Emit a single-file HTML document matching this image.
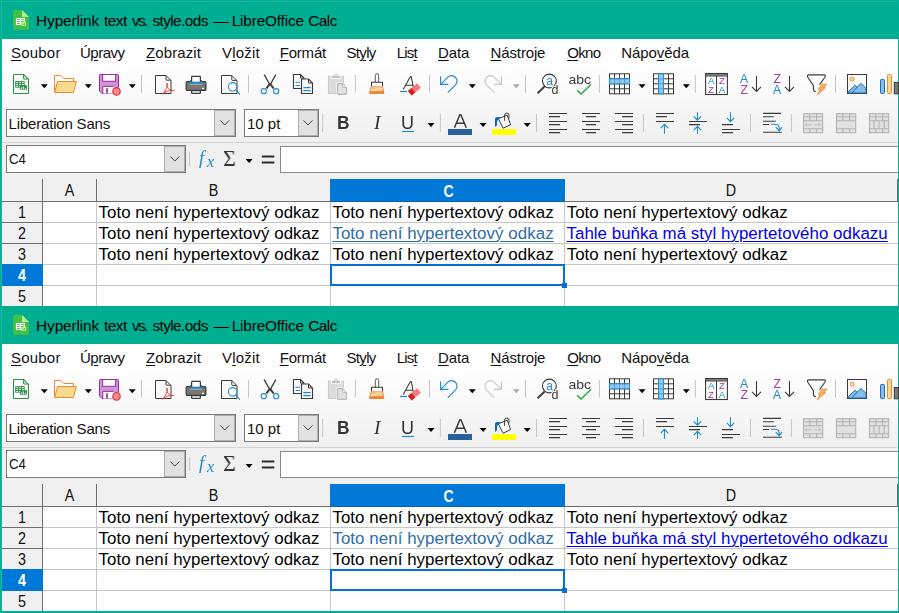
<!DOCTYPE html>
<html lang="cs"><head><meta charset="utf-8"><title>Hyperlink text vs. style.ods — LibreOffice Calc</title>
<style>
html,body{margin:0;padding:0}
body{width:899px;height:613px;overflow:hidden;background:#00af91;font-family:"Liberation Sans",sans-serif;color:#000;position:relative}
.win{position:absolute;left:0;width:899px;height:308px;overflow:hidden}
.a{position:absolute}
.t{position:absolute;white-space:nowrap;line-height:1}
.ui{font-size:15px;color:#111}
u{text-decoration:underline;text-decoration-thickness:1px;text-underline-offset:2px}
.cell{position:absolute;white-space:nowrap;font-size:16.67px;line-height:1;color:#000}
.hd{position:absolute;white-space:nowrap;font-size:15.6px;transform:scaleX(0.92);line-height:1;color:#111;text-align:center}
svg{position:absolute;left:0;top:0}
</style></head><body>
<div class="win" style="top:305px;height:308px"><div class="a" style="left:2px;top:38.8px;width:895.7px;height:270px;background:#fff;"></div>
<div class="a" style="left:2px;top:60px;width:895.7px;height:82px;background:linear-gradient(#ffffff,#f8f8f8 50%,#f0f0f0);"></div>
<div class="t ui" style="left:11.00px;top:45.3px;font-size:15px;letter-spacing:0.2px"><u>S</u>oubor</div>
<div class="t ui" style="left:79.90px;top:45.3px;font-size:15px;letter-spacing:-0.48px">Ú<u>p</u>ravy</div>
<div class="t ui" style="left:146.00px;top:45.3px;font-size:15px;letter-spacing:0.1px"><u>Z</u>obrazit</div>
<div class="t ui" style="left:222.00px;top:45.3px;font-size:15px;letter-spacing:0.2px">V<u>l</u>ožit</div>
<div class="t ui" style="left:279.70px;top:45.3px;font-size:15px;letter-spacing:-0.2px"><u>F</u>ormát</div>
<div class="t ui" style="left:346.50px;top:45.3px;font-size:15px;letter-spacing:-0.675px">St<u>y</u>ly</div>
<div class="t ui" style="left:396.70px;top:45.3px;font-size:15px;letter-spacing:-0.833px">Lis<u>t</u></div>
<div class="t ui" style="left:438.00px;top:45.3px;font-size:15px;letter-spacing:-0.133px"><u>D</u>ata</div>
<div class="t ui" style="left:490.60px;top:45.3px;font-size:15px;letter-spacing:-0.143px"><u>N</u>ástroje</div>
<div class="t ui" style="left:567.20px;top:45.3px;font-size:15px;letter-spacing:-0.667px"><u>O</u>kno</div>
<div class="t ui" style="left:621.20px;top:45.3px;font-size:15px;letter-spacing:-0.057px">Nápo<u>v</u>ěda</div>
<div class="a" style="left:2px;top:142px;width:895.7px;height:37px;background:#f0f0f0;border-top:1px solid #d4d4d4;box-sizing:border-box"></div>
<div class="a" style="left:6px;top:109px;width:230px;height:27.5px;background:#fff;border:1px solid #7a7a7a;box-sizing:border-box"></div>
<div class="a" style="left:214px;top:110px;width:21px;height:25.5px;background:#e1e1e1;border:1px solid #adadad;box-sizing:border-box"></div>
<div class="t ui" style="left:8.60px;top:115.6px;font-size:15px;letter-spacing:-0.186px">Liberation Sans</div>
<div class="a" style="left:244px;top:109px;width:75px;height:27.5px;background:#fff;border:1px solid #7a7a7a;box-sizing:border-box"></div>
<div class="a" style="left:297.5px;top:110px;width:20.5px;height:25.5px;background:#e1e1e1;border:1px solid #adadad;box-sizing:border-box"></div>
<div class="t ui" style="left:247.00px;top:115.6px;font-size:15px;letter-spacing:0.0px">10 pt</div>
<div class="a" style="left:6px;top:145.3px;width:180px;height:27.3px;background:#fff;border:1px solid #7a7a7a;box-sizing:border-box"></div>
<div class="a" style="left:164.2px;top:146.3px;width:21px;height:25.3px;background:#e1e1e1;border:1px solid #adadad;box-sizing:border-box"></div>
<div class="t ui" style="left:8.6px;top:151.3px;font-size:15.3px;transform:scaleX(0.86);transform-origin:0 0">C4</div>
<div class="a" style="left:280.2px;top:145.8px;width:620px;height:27px;background:#fff;border:1px solid #8a8a8a;box-sizing:border-box"></div>
<div class="a" style="left:2px;top:179px;width:895.7px;height:130px;background:#fff;"></div>
<div class="a" style="left:2px;top:179px;width:895.5px;height:22.4px;background:#f0f0f0;"></div>
<div class="a" style="left:2px;top:201.4px;width:41px;height:107px;background:#f0f0f0;"></div>
<div class="a" style="left:43px;top:221.7px;width:855px;height:1px;background:#c6c6c6;"></div>
<div class="a" style="left:43px;top:242.7px;width:855px;height:1px;background:#c6c6c6;"></div>
<div class="a" style="left:43px;top:263.6px;width:855px;height:1px;background:#c6c6c6;"></div>
<div class="a" style="left:43px;top:284.6px;width:855px;height:1px;background:#c6c6c6;"></div>
<div class="a" style="left:95.9px;top:201.4px;width:1px;height:107px;background:#c6c6c6;"></div>
<div class="a" style="left:329.9px;top:201.4px;width:1px;height:107px;background:#c6c6c6;"></div>
<div class="a" style="left:564.3px;top:201.4px;width:1px;height:107px;background:#c6c6c6;"></div>
<div class="a" style="left:2px;top:201px;width:895.5px;height:1px;background:#6e6e6e;"></div>
<div class="a" style="left:42.2px;top:179px;width:1px;height:130px;background:#6e6e6e;"></div>
<div class="a" style="left:95.9px;top:179px;width:1px;height:22.4px;background:#6e6e6e;"></div>
<div class="a" style="left:896.6px;top:179px;width:1px;height:23px;background:#6e6e6e;"></div>
<div class="a" style="left:2px;top:221.7px;width:41px;height:1px;background:#6e6e6e;"></div>
<div class="a" style="left:2px;top:242.7px;width:41px;height:1px;background:#6e6e6e;"></div>
<div class="a" style="left:330px;top:179px;width:234.8px;height:22.6px;background:#0078d7;"></div>
<div class="a" style="left:2px;top:264.1px;width:41.2px;height:21.6px;background:#0078d7;"></div>
<div class="hd" style="left:43px;width:53px;top:182.9px;">A</div>
<div class="hd" style="left:97px;width:233px;top:182.9px;">B</div>
<div class="a" style="left:330px;top:200.5px;width:234.8px;height:1.1px;background:#0064b8;"></div>
<div class="hd" style="left:331.2px;width:235.00000000000006px;top:183.6px;color:#fff;font-weight:bold;transform:scaleX(0.9)">C</div>
<div class="hd" style="left:565px;width:332px;top:182.9px;">D</div>
<div class="hd" style="left:2px;width:40px;top:204.8px;">1</div>
<div class="hd" style="left:2px;width:40px;top:225.75px;">2</div>
<div class="hd" style="left:2px;width:40px;top:246.70000000000002px;">3</div>
<div class="hd" style="left:2px;width:40px;top:267.65px;color:#fff;font-weight:bold">4</div>
<div class="hd" style="left:2px;width:40px;top:288.6px;">5</div>
<div class="cell" style="left:98.50px;top:204.7px;font-size:16.9px;letter-spacing:0.048px">Toto není hypertextový odkaz</div>
<div class="cell" style="left:332.40px;top:204.7px;font-size:16.9px;letter-spacing:0.056px">Toto není hypertextový odkaz</div>
<div class="cell" style="left:566.70px;top:204.7px;font-size:16.9px;letter-spacing:0.044px">Toto není hypertextový odkaz</div>
<div class="cell" style="left:98.50px;top:225.65px;font-size:16.9px;letter-spacing:0.048px">Toto není hypertextový odkaz</div>
<div class="cell" style="left:332.40px;top:225.65px;font-size:16.9px;color:#2e6ca6;letter-spacing:0.056px">Toto není hypertextový odkaz</div>
<div class="cell" style="left:566.50px;top:225.65px;font-size:16.9px;color:#0000ee;text-decoration:underline;text-decoration-thickness:1px;text-underline-offset:2px;letter-spacing:0.026px">Tahle buňka má styl hypertetového odkazu</div>
<div class="cell" style="left:98.50px;top:246.6px;font-size:16.9px;letter-spacing:0.048px">Toto není hypertextový odkaz</div>
<div class="cell" style="left:332.40px;top:246.6px;font-size:16.9px;letter-spacing:0.056px">Toto není hypertextový odkaz</div>
<div class="cell" style="left:566.70px;top:246.6px;font-size:16.9px;letter-spacing:0.044px">Toto není hypertextový odkaz</div>
<div class="a" style="left:330px;top:264px;width:235.1px;height:22.1px;background:transparent;border:2px solid #0470d6;box-sizing:border-box"></div>
<div class="a" style="left:562px;top:283px;width:5.1px;height:5px;background:#0470d6;"></div>
<div class="a" style="left:0px;top:0px;width:899px;height:38.8px;background:#00af91;"></div>
<div class="a" style="left:0px;top:0px;width:2px;height:310px;background:#00af91;"></div>
<div class="a" style="left:897.7px;top:0px;width:2px;height:310px;background:#00af91;"></div>
<div class="a" style="left:1px;top:1px;width:1px;height:310px;background:rgba(255,255,255,0.10);"></div>
<div class="t" style="left:36.10px;top:12.8px;font-size:15.4px;color:#000;letter-spacing:-0.125px">Hyperlink</div>
<div class="t" style="left:103.90px;top:12.8px;font-size:15.4px;color:#000;letter-spacing:-0.467px">text</div>
<div class="t" style="left:132.00px;top:12.8px;font-size:15.4px;color:#000;letter-spacing:-1.75px">vs.</div>
<div class="t" style="left:152.40px;top:12.8px;font-size:15.4px;color:#000;letter-spacing:-0.588px">style.ods</div>
<div class="t" style="left:213.50px;top:12.8px;font-size:15.4px;color:#000;letter-spacing:0px">—</div>
<div class="t" style="left:231.70px;top:12.8px;font-size:15.4px;color:#000;letter-spacing:-0.18px">LibreOffice</div>
<div class="t" style="left:308.20px;top:12.8px;font-size:15.4px;color:#000;letter-spacing:-0.533px">Calc</div>
<svg width="899" height="40" viewBox="0 0 899 40">
<path d="M14.6,10 H22 L29,16.9 V28.3 Q29,29.85 27.4,29.85 H14.6 Q13.05,29.85 13.05,28.3 V11.5 Q13.05,10 14.6,10 Z" fill="#43c046"/>
<path d="M22,10 L29,16.9 H22 Z" fill="#b4f08c"/>
<rect x="15.9" y="18" width="9" height="6.9" fill="#fff"/>
<path d="M17,19.5 h2.8 M17,21.5 h2.8 M17,23.5 h2.8 M21,19.5 h2.8 M21,21.5 h2.8" stroke="#43c046" stroke-width="0.9"/>
<rect x="21.1" y="22" width="5" height="3.9" fill="#b4f08c"/>
<path d="M22.6,25 v-1 M24.4,25 v-1.8" stroke="#43c046" stroke-width="0.9"/>
</svg>
<svg width="899" height="104" viewBox="0 70 899 104" style="top:70px;will-change:transform">
<path d="M14.3,74.5 H23.6 L28.5,79.4 V92.7 Q28.5,93.5 27.7,93.5 H14.3 Q13.5,93.5 13.5,92.7 V75.3 Q13.5,74.5 14.3,74.5 Z" fill="#fdfdfd" stroke="#2f9048" stroke-width="1.1" />
<path d="M23.6,74.8 V78 Q23.6,79 24.6,79 H28.2" fill="none" stroke="#2f9048" stroke-width="1.1" />
<rect x="15.2" y="81.1" width="9.5" height="6.6" fill="#2f9048" />
<rect x="16.2" y="82.2" width="1.9" height="0.9" fill="#fff" />
<rect x="16.2" y="84.1" width="1.9" height="0.9" fill="#fff" />
<rect x="16.2" y="86.0" width="1.9" height="0.9" fill="#fff" />
<rect x="19.1" y="82.2" width="1.9" height="0.9" fill="#fff" />
<rect x="19.1" y="84.1" width="1.9" height="0.9" fill="#fff" />
<rect x="19.1" y="86.0" width="1.9" height="0.9" fill="#fff" />
<rect x="22.0" y="82.2" width="1.9" height="0.9" fill="#fff" />
<rect x="22.0" y="84.1" width="1.9" height="0.9" fill="#fff" />
<rect x="22.0" y="86.0" width="1.9" height="0.9" fill="#fff" />
<rect x="20" y="85.2" width="6.9" height="4.5" fill="#2f9048" />
<rect x="20.9" y="87.4" width="1.0" height="1.5" fill="#fff" />
<rect x="22.9" y="86.4" width="1.0" height="2.5" fill="#fff" />
<rect x="24.9" y="87.9" width="1.0" height="1.0" fill="#fff" />
<path d="M40.8,84.2 h7 l-3.5,4 z" fill="#000" />
<path d="M54.5,92.3 V75.5 H60.8 L64,78.5 H73.5 V81.5" fill="#fff" stroke="#ed8733" stroke-width="1" stroke-linejoin="round"/>
<path d="M57.6,81.5 H76.4 L73.4,92.5 H54.6 Z" fill="#f8db8f" stroke="#ed8733" stroke-width="1" stroke-linejoin="round"/>
<path d="M84.8,84.2 h7 l-3.5,4 z" fill="#000" />
<path d="M100.2,74.5 H117.5 Q118.5,74.5 118.5,75.5 V93.5 H102 L99.5,91 V75.2 Q99.5,74.5 100.2,74.5 Z" fill="#d291d8" stroke="#9b2d9b" stroke-width="1" />
<rect x="102.6" y="74.5" width="13" height="6.8" fill="#fafafa" stroke="#9b2d9b" stroke-width="1" />
<rect x="102.8" y="86.4" width="11" height="7.1" fill="#fff" />
<path d="M102.8,93.5 V86.4 H113.5" fill="none" stroke="#9b2d9b" stroke-width="1" />
<path d="M107,88.3 V93.2" fill="none" stroke="#9b2d9b" stroke-width="1.7" />
<circle cx="116.5" cy="91.4" r="4.5" fill="#fafafa"/>
<circle cx="116.5" cy="91.4" r="3.7" fill="#ff8c90" stroke="#dd3030" stroke-width="1.2"/>
<path d="M128.8,84.2 h7 l-3.5,4 z" fill="#000" />
<path d="M141.5,75 V92.7" fill="none" stroke="#c6c6c6" stroke-width="1" />
<path d="M155.5,75.5 H166 L171,80.5 V93.5 H155.5 Z" fill="#fafafa" stroke="#3a3a38" stroke-width="1" />
<path d="M166,75.8 V79.5 Q166,80.2 166.7,80.2 H170.8" fill="none" stroke="#3a3a38" stroke-width="1" />
<path d="M162.3,94.3 C165.3,91.5 167.5,87 167.5,84.2 C167.5,82.8 166.5,82.8 166.5,84.2 C166.5,87.4 169.5,90.8 173.6,90.5 C170,89.8 165.5,91.3 162.3,94.3 Z" fill="none" stroke="#ee4040" stroke-width="0.95" stroke-linejoin="round"/>
<path d="M187.2,81.6 H204.9 Q205.9,81.6 205.9,82.6 V89.4 Q205.9,90.4 204.9,90.4 H187.2 Q186.2,90.4 186.2,89.4 V82.6 Q186.2,81.6 187.2,81.6 Z" fill="#797774" stroke="#3a3a38" stroke-width="1.2" />
<rect x="191.6" y="76.4" width="8.8" height="6" fill="#fdfdfd" stroke="#3a3a38" stroke-width="1.2" rx="0.8" />
<path d="M189.9,79.9 H191 V81.9 H201 V79.9 H202.1 V83.9 H189.9 Z" fill="#1e8bcd" />
<path d="M191.6,90.6 V92.4 Q191.6,93.3 192.5,93.3 H199.5 Q200.4,93.3 200.4,92.4 V90.6 Z" fill="#fdfdfd" stroke="#3a3a38" stroke-width="1.2" />
<rect x="202" y="87.8" width="2" height="1.2" fill="#fff" />
<rect x="190.2" y="83.9" width="11.6" height="0.5" fill="#e8e8e8" />
<path d="M221.5,75.5 H231.8 L237,80.7 V93.5 H221.5 Z" fill="#fafafa" stroke="#3a3a38" stroke-width="1" />
<path d="M231.8,75.8 V79.7 Q231.8,80.4 232.5,80.4 H236.8" fill="none" stroke="#3a3a38" stroke-width="1" />
<circle cx="232.6" cy="86.8" r="4.2" fill="#fdfdfd" stroke="#1e8bcd" stroke-width="1.05"/>
<path d="M235.6,89.9 L239.9,94.6" fill="none" stroke="#1e8bcd" stroke-width="1.15" />
<path d="M248.5,75 V92.7" fill="none" stroke="#c6c6c6" stroke-width="1" />
<path d="M264.2,74.6 L270,85 L275.8,74.6" fill="none" stroke="#3a3a38" stroke-width="1.3" stroke-linejoin="round"/>
<path d="M270,83.6 L266.4,88.5 M270,83.6 L273.6,88.5" fill="none" stroke="#3a3a38" stroke-width="2" />
<circle cx="263.8" cy="91.2" r="2.6" fill="#fff" stroke="#1e8bcd" stroke-width="1.1"/>
<circle cx="276.2" cy="91.2" r="2.6" fill="#fff" stroke="#1e8bcd" stroke-width="1.1"/>
<path d="M293.5,74.5 H300.5 L304,78 V88.5 H293.5 Z" fill="#fdfdfd" stroke="#3a3a38" stroke-width="1.15" />
<path d="M300.5,74.8 V78 H303.8" fill="none" stroke="#3a3a38" stroke-width="1" />
<path d="M295.5,82.3 H300 M295.5,85.5 H300" fill="none" stroke="#1e8bcd" stroke-width="1.1" />
<path d="M301.5,79 H308.5 L312.5,83 V93.5 H301.5 Z" fill="#fdfdfd" stroke="#3a3a38" stroke-width="1.15" />
<path d="M308.5,79.3 V83 H312.2" fill="none" stroke="#3a3a38" stroke-width="1" />
<path d="M303.3,87.6 H310.7 M303.3,90.6 H310.7" fill="none" stroke="#1e8bcd" stroke-width="1.1" />
<rect x="328.4" y="76.2" width="15.2" height="17.3" fill="#dcdcdc" stroke="#c6c6c6" stroke-width="0.9" />
<rect x="330.9" y="75.5" width="10.2" height="3.2" fill="#fafafa" />
<rect x="332" y="75.9" width="7.9" height="2" fill="#bdbdbd" />
<path d="M334.2,76 A1.75,1.75 0 0 1 337.7,76" fill="#fafafa" stroke="#bdbdbd" stroke-width="0.9" />
<path d="M337.1,82.6 H343 L347.5,87 V95.4 H336.6 V82.6 Z" fill="#fafafa" />
<path d="M338.3,83.6 H342.6 L346.5,87.6 V93.6 Q346.5,94.4 345.7,94.4 H338.3 Q337.6,94.4 337.6,93.6 V84.4 Q337.6,83.6 338.3,83.6 Z" fill="#e1e1e1" stroke="#b9b9b9" stroke-width="1.1" />
<path d="M342.6,83.9 V86.6 Q342.6,87.5 343.5,87.5 H346.3" fill="#f0f0f0" stroke="#b9b9b9" stroke-width="1" />
<path d="M355.4,75 V92.7" fill="none" stroke="#c6c6c6" stroke-width="1" />
<path d="M375.3,82.2 V75.4 Q375.3,73.7 377,73.7 Q378.7,73.7 378.7,75.4 V82.2" fill="#fdfdfd" stroke="#5a5a58" stroke-width="1" />
<path d="M371.5,86.6 V82.3 H382.5 V86.6" fill="#fdfdfd" stroke="#3a3a38" stroke-width="1.1" />
<path d="M371.3,86.9 H382.7 L383.8,93.5 H369.4 Z" fill="#fde3bb" stroke="#ed8733" stroke-width="1" stroke-linejoin="round"/>
<path d="M369.9,91.3 L383.5,90.7 L383.8,93.5 H369.4 Z" fill="#ed8733" />
<path d="M371.2,88.4 L383,90" fill="none" stroke="#f4a95c" stroke-width="0.8" />
<path d="M403.2,89.5 L410.4,76.6 H411.3 L413.8,89.5 M405.7,85.3 H413" fill="none" stroke="#3a3a38" stroke-width="1.05" stroke-linejoin="round"/>
<path d="M400,91.5 H407" fill="none" stroke="#1e8bcd" stroke-width="1.2" />
<g transform="translate(414.4,89.4) rotate(-40)"><rect x="-6" y="-2.9" width="12" height="5.8" fill="#f4787c"/><rect x="-6" y="-2.9" width="4.6" height="5.8" fill="#d42222"/></g>
<path d="M429.5,75 V92.7" fill="none" stroke="#c6c6c6" stroke-width="1" />
<path d="M447.8,92.6 L455.6,84.8 A5.45,5.45 0 0 0 447.9,77.1 L441.2,83.8" fill="none" stroke="#1e8bcd" stroke-width="1.15" />
<path d="M440.6,76.6 V84.4 H448.4" fill="none" stroke="#1e8bcd" stroke-width="1.15" />
<path d="M468.8,84.2 h7 l-3.5,4 z" fill="#000" />
<path d="M494.2,92.6 L486.4,84.8 A5.45,5.45 0 0 1 494.1,77.1 L500.8,83.8" fill="none" stroke="#c8c8c8" stroke-width="1.15" />
<path d="M501.4,76.6 V84.4 H493.6" fill="none" stroke="#c8c8c8" stroke-width="1.15" />
<path d="M512.8,84.2 h7 l-3.5,4 z" fill="#a8a8a8" />
<path d="M525.5,75 V92.7" fill="none" stroke="#c6c6c6" stroke-width="1" />
<circle cx="549.4" cy="81" r="6.9" fill="#fdfdfd" stroke="#3a3a38" stroke-width="1.1"/>
<path d="M544.6,86.5 L537.6,93.2" fill="none" stroke="#3a3a38" stroke-width="1.9" />
<text x="546.2" y="84.7" font-size="12" fill="#1e8bcd" font-family="Liberation Sans, sans-serif" >a</text>
<text x="551.6" y="93.7" font-size="12.5" fill="#3a3a38" font-family="Liberation Sans, sans-serif" stroke="#fafafa" stroke-width="2.2" paint-order="stroke">d</text>
<text x="568.4" y="83.9" font-size="12.6" fill="#3a3a38" font-family="Liberation Sans, sans-serif" textLength="22.6" lengthAdjust="spacingAndGlyphs">abc</text>
<path d="M577.2,90.4 L581.2,94 L591,84.3" fill="none" stroke="#2aa84a" stroke-width="1.5" />
<path d="M599.4,75 V92.7" fill="none" stroke="#c6c6c6" stroke-width="1" />
<rect x="609.5" y="73.8" width="20" height="20" fill="#fff" stroke="#3a3a38" stroke-width="1" />
<path d="M614.5,73.8 v20 M609.5,78.8 h20 M619.5,73.8 v20 M609.5,83.8 h20 M624.5,73.8 v20 M609.5,88.8 h20 " fill="none" stroke="#3a3a38" stroke-width="1" />
<rect x="609.5" y="78.8" width="20" height="5" fill="#92c7ef" stroke="#1e8bcd" stroke-width="1" />
<path d="M614.5,78.8 v5 M619.5,78.8 v5 M624.5,78.8 v5" fill="none" stroke="#4fa3dc" stroke-width="1" />
<path d="M638.5999999999999,84.2 h7 l-3.5,4 z" fill="#000" />
<rect x="653.5" y="73.8" width="20" height="20" fill="#fff" stroke="#3a3a38" stroke-width="1" />
<path d="M658.5,73.8 v20 M653.5,78.8 h20 M663.5,73.8 v20 M653.5,83.8 h20 M668.5,73.8 v20 M653.5,88.8 h20 " fill="none" stroke="#3a3a38" stroke-width="1" />
<rect x="658.5" y="73.8" width="5" height="20" fill="#92c7ef" stroke="#1e8bcd" stroke-width="1" />
<path d="M658.5,78.8 h5 M658.5,83.8 h5 M658.5,88.8 h5" fill="none" stroke="#4fa3dc" stroke-width="1" />
<path d="M682.8,84.2 h7 l-3.5,4 z" fill="#000" />
<path d="M695.4,75 V92.7" fill="none" stroke="#c6c6c6" stroke-width="1" />
<rect x="705.6" y="73.5" width="21.8" height="21" fill="#fdfdfd" stroke="#3a3a38" stroke-width="1.1" />
<rect x="706" y="74" width="21" height="1.6" fill="#797774" />
<path d="M705.5,76 H727.5" fill="none" stroke="#3a3a38" stroke-width="1" />
<path d="M716.5,76 V94.5" fill="none" stroke="#3a3a38" stroke-width="1" />
<text x="708" y="84.4" font-size="9.7" fill="#1e8bcd" font-family="Liberation Sans, sans-serif" >A</text>
<text x="708" y="93" font-size="9.5" fill="#a33e9a" font-family="Liberation Sans, sans-serif" >Z</text>
<text x="718.9" y="83.8" font-size="9.5" fill="#a33e9a" font-family="Liberation Sans, sans-serif" >Z</text>
<text x="718.8" y="93" font-size="9.7" fill="#1e8bcd" font-family="Liberation Sans, sans-serif" >A</text>
<text x="739.9" y="82.9" font-size="12.2" fill="#1e8bcd" font-family="Liberation Sans, sans-serif" >A</text>
<text x="740.6" y="93.9" font-size="12.2" fill="#a33e9a" font-family="Liberation Sans, sans-serif" >Z</text>
<path d="M756.5,76 V91 M752,86.8 L756.5,91.4 L761,86.8" fill="none" stroke="#3a3a38" stroke-width="1.1" />
<text x="773.6" y="82.9" font-size="12.2" fill="#a33e9a" font-family="Liberation Sans, sans-serif" >Z</text>
<text x="772.9" y="93.9" font-size="12.2" fill="#1e8bcd" font-family="Liberation Sans, sans-serif" >A</text>
<path d="M789.5,76 V91 M785,86.8 L789.5,91.4 L794,86.8" fill="none" stroke="#3a3a38" stroke-width="1.1" />
<path d="M808.9,74.9 H823.9 Q826.2,75.1 824.9,77.2 L819.6,84.6 M813.4,85.6 L807.8,77.2 Q806.6,75.1 808.9,74.9 M813.4,85.6 V89.6 Q813.5,91.2 815.8,91.7" fill="none" stroke="#3a3a38" stroke-width="1.1" stroke-linejoin="round"/>
<path d="M821.8,84.2 H827 L823.6,87.6 H825.6 L817.2,95 L820.2,89.4 H818.4 Z" fill="#f9b35c" stroke="#ed8733" stroke-width="0.8" stroke-linejoin="round"/>
<path d="M835.5,75 V92.7" fill="none" stroke="#c6c6c6" stroke-width="1" />
<rect x="847.5" y="74.5" width="19" height="19" fill="#fafafa" stroke="#3a3a38" stroke-width="1" />
<circle cx="852.2" cy="79.2" r="2" fill="#fbd9a0" stroke="#ed8733" stroke-width="0.9"/>
<path d="M848,92 L855,85.3 L857,87.2 L861,83.4 L866,88.3 V93 H848 Z" fill="#83beec" stroke="#1e6eb0" stroke-width="1" stroke-linejoin="round"/>
<path d="M852,93 L857,87.2" fill="none" stroke="#1e6eb0" stroke-width="1" />
<rect x="880.5" y="79.5" width="4" height="14" fill="#83beec" stroke="#1e6eb0" stroke-width="1" rx="0.8" />
<rect x="887.5" y="74.5" width="4" height="19" fill="#f8db8f" stroke="#ed8733" stroke-width="1" rx="0.8" />
<rect x="894.3" y="82.5" width="4" height="11.3" fill="#7a7a78" stroke="#3a3a38" stroke-width="1" />
<path d="M220.2,120.4 L224.7,125.0 L229.2,120.4" fill="none" stroke="#444" stroke-width="1.0" />
<path d="M303.5,120.4 L308,125.0 L312.5,120.4" fill="none" stroke="#444" stroke-width="1.0" />
<path d="M322.7,114 V131.8" fill="none" stroke="#c6c6c6" stroke-width="1" />
<path d="M402,131.5 H414" fill="none" stroke="#1e8bcd" stroke-width="1.2" />
<path d="M427.5,123.0 h7 l-3.5,4 z" fill="#000" />
<path d="M440.4,114 V131.8" fill="none" stroke="#c6c6c6" stroke-width="1" />
<path d="M454.4,127.8 L459.8,114.8 H460.9 L466.3,127.8 M456.4,123.2 H464.3" fill="none" stroke="#3a3a38" stroke-width="1.5" stroke-linejoin="round"/>
<rect x="448" y="129" width="24" height="6" fill="#2a6099" />
<path d="M479.6,123.0 h7 l-3.5,4 z" fill="#000" />
<path d="M495,127 V119.2 Q495,117 497.2,117 L500.8,117.2 L498.4,118.9 L497.1,121.2 L496.9,125.2 Z" fill="#0a68c0" />
<path d="M498.3,118.8 L507.2,115.1 L510.6,124.6 L503.1,128.2 Z" fill="#fdfdfd" stroke="#3a3a38" stroke-width="1" stroke-linejoin="round"/>
<path d="M504.6,120.8 V115.2 Q504.6,113 506.8,113 Q509,113 509,115.2 V118.2" fill="none" stroke="#3a3a38" stroke-width="1" />
<rect x="492" y="129" width="24" height="6" fill="#ffff00" />
<path d="M523.6999999999999,123.0 h7 l-3.5,4 z" fill="#000" />
<path d="M536.5,114 V131.8" fill="none" stroke="#c6c6c6" stroke-width="1" />
<path d="M549,113.5 H567 M549,116.6 H560 M549,121.5 H567 M549,124.6 H560 M549,129.5 H567 M549,132.6 H560 " fill="none" stroke="#3a3a38" stroke-width="1.1" />
<path d="M582,113.5 H600 M586,116.6 H596 M582,121.5 H600 M586,124.6 H596 M582,129.5 H600 M586,132.6 H596 " fill="none" stroke="#3a3a38" stroke-width="1.1" />
<path d="M615,113.5 H633 M622,116.6 H633 M615,121.5 H633 M622,124.6 H633 M615,129.5 H633 M622,132.6 H633 " fill="none" stroke="#3a3a38" stroke-width="1.1" />
<path d="M643.4,114 V131.8" fill="none" stroke="#c6c6c6" stroke-width="1" />
<path d="M656,113.5 H674 M656,116.6 H667 M656,121.5 H674 " fill="none" stroke="#3a3a38" stroke-width="1.1" />
<path d="M664.5,133.8 V124.6 M660.8,128.2 L664.5,124.4 L668.2,128.2" fill="none" stroke="#1e8bcd" stroke-width="1.1" />
<path d="M689,121.5 H707 M689,124.6 H700 " fill="none" stroke="#3a3a38" stroke-width="1.1" />
<path d="M697.5,112.2 V120 M693.8,116.4 L697.5,120.2 L701.2,116.4" fill="none" stroke="#1e8bcd" stroke-width="1.1" />
<path d="M697.5,133.8 V126.6 M693.8,130.2 L697.5,126.4 L701.2,130.2" fill="none" stroke="#1e8bcd" stroke-width="1.1" />
<path d="M722,124.6 H733 M722,129.5 H740 M722,132.6 H733 " fill="none" stroke="#3a3a38" stroke-width="1.1" />
<path d="M730.5,112.2 V121.4 M726.8,117.8 L730.5,121.6 L734.2,117.8" fill="none" stroke="#1e8bcd" stroke-width="1.1" />
<path d="M750.5,114 V131.8" fill="none" stroke="#c6c6c6" stroke-width="1" />
<path d="M763,113.4 H781 M763,116.8 H773.8 M763,121.2 H775.8 M763,124.5 H769 M763,132.2 H781.8 " fill="none" stroke="#3a3a38" stroke-width="1.1" />
<path d="M771,124.3 H775.5 Q779.2,124.5 779.3,128.5 V130.4 M775.8,127.2 L779.3,130.8 L782,127.2" fill="none" stroke="#1e8bcd" stroke-width="1.1" />
<path d="M791.4,114 V131.8" fill="none" stroke="#c6c6c6" stroke-width="1" />
<rect x="803.5" y="113.7" width="19.2" height="19" fill="#e1e1e1" stroke="#b3b3b3" stroke-width="1.1" />
<path d="M803.5,116.8 h19 M803.5,120.7 h19 M803.5,128.8 h19 M809.8,113.7 v7 M816.6,113.7 v7 M809.8,128.8 v4 M816.6,128.8 v4 " fill="none" stroke="#b3b3b3" stroke-width="1.1" />
<path d="M805.3,124.8 h6.2 M807.3,122.8 l-2,2 l2,2 M814.5,124.8 h6.2 M818.7,122.8 l2,2 l-2,2" fill="none" stroke="#bcbcbc" stroke-width="0.9" />
<rect x="836.5" y="113.7" width="19.2" height="19" fill="#e1e1e1" stroke="#b3b3b3" stroke-width="1.1" />
<path d="M836.5,116.8 h19 M836.5,120.7 h19 M836.5,128.8 h19 M842.8,113.7 v7 M849.6,113.7 v7 M842.8,128.8 v4 M849.6,128.8 v4 " fill="none" stroke="#b3b3b3" stroke-width="1.1" />
<rect x="869.5" y="113.7" width="19.2" height="19" fill="#e1e1e1" stroke="#b3b3b3" stroke-width="1.1" />
<path d="M869.5,116.8 h19 M869.5,120.7 h19 M869.5,128.8 h19 M875.8,113.7 v7 M882.6,113.7 v7 M875.8,128.8 v4 M882.6,128.8 v4 M874,120.7 v8 M879.1,120.7 v8 M884.2,120.7 v8 " fill="none" stroke="#b3b3b3" stroke-width="1.1" />
<path d="M170.3,156.5 L174.8,161.10000000000002 L179.3,156.5" fill="none" stroke="#444" stroke-width="1.0" />
<path d="M189.5,152.2 V166" fill="none" stroke="#c6c6c6" stroke-width="1" />
<path d="M245.60000000000002,158.9 h7 l-3.5,4 z" fill="#000" />
<rect x="261.8" y="155.5" width="12.5" height="2" fill="#2a2a2a" />
<rect x="261.8" y="161.5" width="12.5" height="2" fill="#2a2a2a" />
</svg>
<div class="t" style="left:336.9px;top:114.2px;font-weight:bold;font-size:18.8px;color:#333;transform:scaleX(0.92);transform-origin:0 0;will-change:transform">B</div>
<div class="t" style="left:373.6px;top:113px;font-family:'Liberation Serif',serif;font-style:italic;font-size:19.5px;color:#333;will-change:transform">I</div>
<div class="t" style="left:401.3px;top:113.5px;font-size:18px;color:#333;will-change:transform">U</div>
<div class="t" style="left:222.9px;top:147.4px;font-family:'Liberation Serif',serif;font-size:23.5px;color:#333;transform:scaleX(0.94);transform-origin:0 0;will-change:transform">Σ</div>
<div class="t" style="left:199.4px;top:149.0px;font-family:'Liberation Serif',serif;font-style:italic;font-size:18.5px;color:#1e8bcd;will-change:transform">f</div>
<div class="t" style="left:206.7px;top:153.7px;font-family:'Liberation Serif',serif;font-style:italic;font-size:16px;color:#1e8bcd;will-change:transform">x</div></div>
<div class="win" style="top:0;height:306px"><div class="a" style="left:2px;top:38.8px;width:895.7px;height:270px;background:#fff;"></div>
<div class="a" style="left:2px;top:60px;width:895.7px;height:82px;background:linear-gradient(#ffffff,#f8f8f8 50%,#f0f0f0);"></div>
<div class="t ui" style="left:11.00px;top:45.3px;font-size:15px;letter-spacing:0.2px"><u>S</u>oubor</div>
<div class="t ui" style="left:79.90px;top:45.3px;font-size:15px;letter-spacing:-0.48px">Ú<u>p</u>ravy</div>
<div class="t ui" style="left:146.00px;top:45.3px;font-size:15px;letter-spacing:0.1px"><u>Z</u>obrazit</div>
<div class="t ui" style="left:222.00px;top:45.3px;font-size:15px;letter-spacing:0.2px">V<u>l</u>ožit</div>
<div class="t ui" style="left:279.70px;top:45.3px;font-size:15px;letter-spacing:-0.2px"><u>F</u>ormát</div>
<div class="t ui" style="left:346.50px;top:45.3px;font-size:15px;letter-spacing:-0.675px">St<u>y</u>ly</div>
<div class="t ui" style="left:396.70px;top:45.3px;font-size:15px;letter-spacing:-0.833px">Lis<u>t</u></div>
<div class="t ui" style="left:438.00px;top:45.3px;font-size:15px;letter-spacing:-0.133px"><u>D</u>ata</div>
<div class="t ui" style="left:490.60px;top:45.3px;font-size:15px;letter-spacing:-0.143px"><u>N</u>ástroje</div>
<div class="t ui" style="left:567.20px;top:45.3px;font-size:15px;letter-spacing:-0.667px"><u>O</u>kno</div>
<div class="t ui" style="left:621.20px;top:45.3px;font-size:15px;letter-spacing:-0.057px">Nápo<u>v</u>ěda</div>
<div class="a" style="left:2px;top:142px;width:895.7px;height:37px;background:#f0f0f0;border-top:1px solid #d4d4d4;box-sizing:border-box"></div>
<div class="a" style="left:6px;top:109px;width:230px;height:27.5px;background:#fff;border:1px solid #7a7a7a;box-sizing:border-box"></div>
<div class="a" style="left:214px;top:110px;width:21px;height:25.5px;background:#e1e1e1;border:1px solid #adadad;box-sizing:border-box"></div>
<div class="t ui" style="left:8.60px;top:115.6px;font-size:15px;letter-spacing:-0.186px">Liberation Sans</div>
<div class="a" style="left:244px;top:109px;width:75px;height:27.5px;background:#fff;border:1px solid #7a7a7a;box-sizing:border-box"></div>
<div class="a" style="left:297.5px;top:110px;width:20.5px;height:25.5px;background:#e1e1e1;border:1px solid #adadad;box-sizing:border-box"></div>
<div class="t ui" style="left:247.00px;top:115.6px;font-size:15px;letter-spacing:0.0px">10 pt</div>
<div class="a" style="left:6px;top:145.3px;width:180px;height:27.3px;background:#fff;border:1px solid #7a7a7a;box-sizing:border-box"></div>
<div class="a" style="left:164.2px;top:146.3px;width:21px;height:25.3px;background:#e1e1e1;border:1px solid #adadad;box-sizing:border-box"></div>
<div class="t ui" style="left:8.6px;top:151.3px;font-size:15.3px;transform:scaleX(0.86);transform-origin:0 0">C4</div>
<div class="a" style="left:280.2px;top:145.8px;width:620px;height:27px;background:#fff;border:1px solid #8a8a8a;box-sizing:border-box"></div>
<div class="a" style="left:2px;top:179px;width:895.7px;height:130px;background:#fff;"></div>
<div class="a" style="left:2px;top:179px;width:895.5px;height:22.4px;background:#f0f0f0;"></div>
<div class="a" style="left:2px;top:201.4px;width:41px;height:107px;background:#f0f0f0;"></div>
<div class="a" style="left:43px;top:221.7px;width:855px;height:1px;background:#c6c6c6;"></div>
<div class="a" style="left:43px;top:242.7px;width:855px;height:1px;background:#c6c6c6;"></div>
<div class="a" style="left:43px;top:263.6px;width:855px;height:1px;background:#c6c6c6;"></div>
<div class="a" style="left:43px;top:284.6px;width:855px;height:1px;background:#c6c6c6;"></div>
<div class="a" style="left:95.9px;top:201.4px;width:1px;height:107px;background:#c6c6c6;"></div>
<div class="a" style="left:329.9px;top:201.4px;width:1px;height:107px;background:#c6c6c6;"></div>
<div class="a" style="left:564.3px;top:201.4px;width:1px;height:107px;background:#c6c6c6;"></div>
<div class="a" style="left:2px;top:201px;width:895.5px;height:1px;background:#6e6e6e;"></div>
<div class="a" style="left:42.2px;top:179px;width:1px;height:130px;background:#6e6e6e;"></div>
<div class="a" style="left:95.9px;top:179px;width:1px;height:22.4px;background:#6e6e6e;"></div>
<div class="a" style="left:896.6px;top:179px;width:1px;height:23px;background:#6e6e6e;"></div>
<div class="a" style="left:2px;top:221.7px;width:41px;height:1px;background:#6e6e6e;"></div>
<div class="a" style="left:2px;top:242.7px;width:41px;height:1px;background:#6e6e6e;"></div>
<div class="a" style="left:330px;top:179px;width:234.8px;height:22.6px;background:#0078d7;"></div>
<div class="a" style="left:2px;top:264.1px;width:41.2px;height:21.6px;background:#0078d7;"></div>
<div class="hd" style="left:43px;width:53px;top:182.9px;">A</div>
<div class="hd" style="left:97px;width:233px;top:182.9px;">B</div>
<div class="a" style="left:330px;top:200.5px;width:234.8px;height:1.1px;background:#0064b8;"></div>
<div class="hd" style="left:331.2px;width:235.00000000000006px;top:183.6px;color:#fff;font-weight:bold;transform:scaleX(0.9)">C</div>
<div class="hd" style="left:565px;width:332px;top:182.9px;">D</div>
<div class="hd" style="left:2px;width:40px;top:204.8px;">1</div>
<div class="hd" style="left:2px;width:40px;top:225.75px;">2</div>
<div class="hd" style="left:2px;width:40px;top:246.70000000000002px;">3</div>
<div class="hd" style="left:2px;width:40px;top:267.65px;color:#fff;font-weight:bold">4</div>
<div class="hd" style="left:2px;width:40px;top:288.6px;">5</div>
<div class="cell" style="left:98.50px;top:204.7px;font-size:16.9px;letter-spacing:0.048px">Toto není hypertextový odkaz</div>
<div class="cell" style="left:332.40px;top:204.7px;font-size:16.9px;letter-spacing:0.056px">Toto není hypertextový odkaz</div>
<div class="cell" style="left:566.70px;top:204.7px;font-size:16.9px;letter-spacing:0.044px">Toto není hypertextový odkaz</div>
<div class="cell" style="left:98.50px;top:225.65px;font-size:16.9px;letter-spacing:0.048px">Toto není hypertextový odkaz</div>
<div class="cell" style="left:332.40px;top:225.65px;font-size:16.9px;color:#2e6ca6;text-decoration:underline;text-decoration-thickness:1px;text-underline-offset:2px;letter-spacing:0.056px">Toto není hypertextový odkaz</div>
<div class="cell" style="left:566.50px;top:225.65px;font-size:16.9px;color:#0000ee;text-decoration:underline;text-decoration-thickness:1px;text-underline-offset:2px;letter-spacing:0.026px">Tahle buňka má styl hypertetového odkazu</div>
<div class="cell" style="left:98.50px;top:246.6px;font-size:16.9px;letter-spacing:0.048px">Toto není hypertextový odkaz</div>
<div class="cell" style="left:332.40px;top:246.6px;font-size:16.9px;letter-spacing:0.056px">Toto není hypertextový odkaz</div>
<div class="cell" style="left:566.70px;top:246.6px;font-size:16.9px;letter-spacing:0.044px">Toto není hypertextový odkaz</div>
<div class="a" style="left:330px;top:264px;width:235.1px;height:22.1px;background:transparent;border:2px solid #0470d6;box-sizing:border-box"></div>
<div class="a" style="left:562px;top:283px;width:5.1px;height:5px;background:#0470d6;"></div>
<div class="a" style="left:0px;top:0px;width:899px;height:38.8px;background:#00af91;"></div>
<div class="a" style="left:0px;top:0px;width:2px;height:310px;background:#00af91;"></div>
<div class="a" style="left:897.7px;top:0px;width:2px;height:310px;background:#00af91;"></div>
<div class="a" style="left:1px;top:1px;width:897px;height:1px;background:rgba(255,255,255,0.10);"></div>
<div class="a" style="left:1px;top:1px;width:1px;height:310px;background:rgba(255,255,255,0.10);"></div>
<div class="t" style="left:36.10px;top:12.8px;font-size:15.4px;color:#000;letter-spacing:-0.125px">Hyperlink</div>
<div class="t" style="left:103.90px;top:12.8px;font-size:15.4px;color:#000;letter-spacing:-0.467px">text</div>
<div class="t" style="left:132.00px;top:12.8px;font-size:15.4px;color:#000;letter-spacing:-1.75px">vs.</div>
<div class="t" style="left:152.40px;top:12.8px;font-size:15.4px;color:#000;letter-spacing:-0.588px">style.ods</div>
<div class="t" style="left:213.50px;top:12.8px;font-size:15.4px;color:#000;letter-spacing:0px">—</div>
<div class="t" style="left:231.70px;top:12.8px;font-size:15.4px;color:#000;letter-spacing:-0.18px">LibreOffice</div>
<div class="t" style="left:308.20px;top:12.8px;font-size:15.4px;color:#000;letter-spacing:-0.533px">Calc</div>
<svg width="899" height="40" viewBox="0 0 899 40">
<path d="M14.6,10 H22 L29,16.9 V28.3 Q29,29.85 27.4,29.85 H14.6 Q13.05,29.85 13.05,28.3 V11.5 Q13.05,10 14.6,10 Z" fill="#43c046"/>
<path d="M22,10 L29,16.9 H22 Z" fill="#b4f08c"/>
<rect x="15.9" y="18" width="9" height="6.9" fill="#fff"/>
<path d="M17,19.5 h2.8 M17,21.5 h2.8 M17,23.5 h2.8 M21,19.5 h2.8 M21,21.5 h2.8" stroke="#43c046" stroke-width="0.9"/>
<rect x="21.1" y="22" width="5" height="3.9" fill="#b4f08c"/>
<path d="M22.6,25 v-1 M24.4,25 v-1.8" stroke="#43c046" stroke-width="0.9"/>
</svg>
<svg width="899" height="104" viewBox="0 70 899 104" style="top:70px;will-change:transform">
<path d="M14.3,74.5 H23.6 L28.5,79.4 V92.7 Q28.5,93.5 27.7,93.5 H14.3 Q13.5,93.5 13.5,92.7 V75.3 Q13.5,74.5 14.3,74.5 Z" fill="#fdfdfd" stroke="#2f9048" stroke-width="1.1" />
<path d="M23.6,74.8 V78 Q23.6,79 24.6,79 H28.2" fill="none" stroke="#2f9048" stroke-width="1.1" />
<rect x="15.2" y="81.1" width="9.5" height="6.6" fill="#2f9048" />
<rect x="16.2" y="82.2" width="1.9" height="0.9" fill="#fff" />
<rect x="16.2" y="84.1" width="1.9" height="0.9" fill="#fff" />
<rect x="16.2" y="86.0" width="1.9" height="0.9" fill="#fff" />
<rect x="19.1" y="82.2" width="1.9" height="0.9" fill="#fff" />
<rect x="19.1" y="84.1" width="1.9" height="0.9" fill="#fff" />
<rect x="19.1" y="86.0" width="1.9" height="0.9" fill="#fff" />
<rect x="22.0" y="82.2" width="1.9" height="0.9" fill="#fff" />
<rect x="22.0" y="84.1" width="1.9" height="0.9" fill="#fff" />
<rect x="22.0" y="86.0" width="1.9" height="0.9" fill="#fff" />
<rect x="20" y="85.2" width="6.9" height="4.5" fill="#2f9048" />
<rect x="20.9" y="87.4" width="1.0" height="1.5" fill="#fff" />
<rect x="22.9" y="86.4" width="1.0" height="2.5" fill="#fff" />
<rect x="24.9" y="87.9" width="1.0" height="1.0" fill="#fff" />
<path d="M40.8,84.2 h7 l-3.5,4 z" fill="#000" />
<path d="M54.5,92.3 V75.5 H60.8 L64,78.5 H73.5 V81.5" fill="#fff" stroke="#ed8733" stroke-width="1" stroke-linejoin="round"/>
<path d="M57.6,81.5 H76.4 L73.4,92.5 H54.6 Z" fill="#f8db8f" stroke="#ed8733" stroke-width="1" stroke-linejoin="round"/>
<path d="M84.8,84.2 h7 l-3.5,4 z" fill="#000" />
<path d="M100.2,74.5 H117.5 Q118.5,74.5 118.5,75.5 V93.5 H102 L99.5,91 V75.2 Q99.5,74.5 100.2,74.5 Z" fill="#d291d8" stroke="#9b2d9b" stroke-width="1" />
<rect x="102.6" y="74.5" width="13" height="6.8" fill="#fafafa" stroke="#9b2d9b" stroke-width="1" />
<rect x="102.8" y="86.4" width="11" height="7.1" fill="#fff" />
<path d="M102.8,93.5 V86.4 H113.5" fill="none" stroke="#9b2d9b" stroke-width="1" />
<path d="M107,88.3 V93.2" fill="none" stroke="#9b2d9b" stroke-width="1.7" />
<circle cx="116.5" cy="91.4" r="4.5" fill="#fafafa"/>
<circle cx="116.5" cy="91.4" r="3.7" fill="#ff8c90" stroke="#dd3030" stroke-width="1.2"/>
<path d="M128.8,84.2 h7 l-3.5,4 z" fill="#000" />
<path d="M141.5,75 V92.7" fill="none" stroke="#c6c6c6" stroke-width="1" />
<path d="M155.5,75.5 H166 L171,80.5 V93.5 H155.5 Z" fill="#fafafa" stroke="#3a3a38" stroke-width="1" />
<path d="M166,75.8 V79.5 Q166,80.2 166.7,80.2 H170.8" fill="none" stroke="#3a3a38" stroke-width="1" />
<path d="M162.3,94.3 C165.3,91.5 167.5,87 167.5,84.2 C167.5,82.8 166.5,82.8 166.5,84.2 C166.5,87.4 169.5,90.8 173.6,90.5 C170,89.8 165.5,91.3 162.3,94.3 Z" fill="none" stroke="#ee4040" stroke-width="0.95" stroke-linejoin="round"/>
<path d="M187.2,81.6 H204.9 Q205.9,81.6 205.9,82.6 V89.4 Q205.9,90.4 204.9,90.4 H187.2 Q186.2,90.4 186.2,89.4 V82.6 Q186.2,81.6 187.2,81.6 Z" fill="#797774" stroke="#3a3a38" stroke-width="1.2" />
<rect x="191.6" y="76.4" width="8.8" height="6" fill="#fdfdfd" stroke="#3a3a38" stroke-width="1.2" rx="0.8" />
<path d="M189.9,79.9 H191 V81.9 H201 V79.9 H202.1 V83.9 H189.9 Z" fill="#1e8bcd" />
<path d="M191.6,90.6 V92.4 Q191.6,93.3 192.5,93.3 H199.5 Q200.4,93.3 200.4,92.4 V90.6 Z" fill="#fdfdfd" stroke="#3a3a38" stroke-width="1.2" />
<rect x="202" y="87.8" width="2" height="1.2" fill="#fff" />
<rect x="190.2" y="83.9" width="11.6" height="0.5" fill="#e8e8e8" />
<path d="M221.5,75.5 H231.8 L237,80.7 V93.5 H221.5 Z" fill="#fafafa" stroke="#3a3a38" stroke-width="1" />
<path d="M231.8,75.8 V79.7 Q231.8,80.4 232.5,80.4 H236.8" fill="none" stroke="#3a3a38" stroke-width="1" />
<circle cx="232.6" cy="86.8" r="4.2" fill="#fdfdfd" stroke="#1e8bcd" stroke-width="1.05"/>
<path d="M235.6,89.9 L239.9,94.6" fill="none" stroke="#1e8bcd" stroke-width="1.15" />
<path d="M248.5,75 V92.7" fill="none" stroke="#c6c6c6" stroke-width="1" />
<path d="M264.2,74.6 L270,85 L275.8,74.6" fill="none" stroke="#3a3a38" stroke-width="1.3" stroke-linejoin="round"/>
<path d="M270,83.6 L266.4,88.5 M270,83.6 L273.6,88.5" fill="none" stroke="#3a3a38" stroke-width="2" />
<circle cx="263.8" cy="91.2" r="2.6" fill="#fff" stroke="#1e8bcd" stroke-width="1.1"/>
<circle cx="276.2" cy="91.2" r="2.6" fill="#fff" stroke="#1e8bcd" stroke-width="1.1"/>
<path d="M293.5,74.5 H300.5 L304,78 V88.5 H293.5 Z" fill="#fdfdfd" stroke="#3a3a38" stroke-width="1.15" />
<path d="M300.5,74.8 V78 H303.8" fill="none" stroke="#3a3a38" stroke-width="1" />
<path d="M295.5,82.3 H300 M295.5,85.5 H300" fill="none" stroke="#1e8bcd" stroke-width="1.1" />
<path d="M301.5,79 H308.5 L312.5,83 V93.5 H301.5 Z" fill="#fdfdfd" stroke="#3a3a38" stroke-width="1.15" />
<path d="M308.5,79.3 V83 H312.2" fill="none" stroke="#3a3a38" stroke-width="1" />
<path d="M303.3,87.6 H310.7 M303.3,90.6 H310.7" fill="none" stroke="#1e8bcd" stroke-width="1.1" />
<rect x="328.4" y="76.2" width="15.2" height="17.3" fill="#dcdcdc" stroke="#c6c6c6" stroke-width="0.9" />
<rect x="330.9" y="75.5" width="10.2" height="3.2" fill="#fafafa" />
<rect x="332" y="75.9" width="7.9" height="2" fill="#bdbdbd" />
<path d="M334.2,76 A1.75,1.75 0 0 1 337.7,76" fill="#fafafa" stroke="#bdbdbd" stroke-width="0.9" />
<path d="M337.1,82.6 H343 L347.5,87 V95.4 H336.6 V82.6 Z" fill="#fafafa" />
<path d="M338.3,83.6 H342.6 L346.5,87.6 V93.6 Q346.5,94.4 345.7,94.4 H338.3 Q337.6,94.4 337.6,93.6 V84.4 Q337.6,83.6 338.3,83.6 Z" fill="#e1e1e1" stroke="#b9b9b9" stroke-width="1.1" />
<path d="M342.6,83.9 V86.6 Q342.6,87.5 343.5,87.5 H346.3" fill="#f0f0f0" stroke="#b9b9b9" stroke-width="1" />
<path d="M355.4,75 V92.7" fill="none" stroke="#c6c6c6" stroke-width="1" />
<path d="M375.3,82.2 V75.4 Q375.3,73.7 377,73.7 Q378.7,73.7 378.7,75.4 V82.2" fill="#fdfdfd" stroke="#5a5a58" stroke-width="1" />
<path d="M371.5,86.6 V82.3 H382.5 V86.6" fill="#fdfdfd" stroke="#3a3a38" stroke-width="1.1" />
<path d="M371.3,86.9 H382.7 L383.8,93.5 H369.4 Z" fill="#fde3bb" stroke="#ed8733" stroke-width="1" stroke-linejoin="round"/>
<path d="M369.9,91.3 L383.5,90.7 L383.8,93.5 H369.4 Z" fill="#ed8733" />
<path d="M371.2,88.4 L383,90" fill="none" stroke="#f4a95c" stroke-width="0.8" />
<path d="M403.2,89.5 L410.4,76.6 H411.3 L413.8,89.5 M405.7,85.3 H413" fill="none" stroke="#3a3a38" stroke-width="1.05" stroke-linejoin="round"/>
<path d="M400,91.5 H407" fill="none" stroke="#1e8bcd" stroke-width="1.2" />
<g transform="translate(414.4,89.4) rotate(-40)"><rect x="-6" y="-2.9" width="12" height="5.8" fill="#f4787c"/><rect x="-6" y="-2.9" width="4.6" height="5.8" fill="#d42222"/></g>
<path d="M429.5,75 V92.7" fill="none" stroke="#c6c6c6" stroke-width="1" />
<path d="M447.8,92.6 L455.6,84.8 A5.45,5.45 0 0 0 447.9,77.1 L441.2,83.8" fill="none" stroke="#1e8bcd" stroke-width="1.15" />
<path d="M440.6,76.6 V84.4 H448.4" fill="none" stroke="#1e8bcd" stroke-width="1.15" />
<path d="M468.8,84.2 h7 l-3.5,4 z" fill="#000" />
<path d="M494.2,92.6 L486.4,84.8 A5.45,5.45 0 0 1 494.1,77.1 L500.8,83.8" fill="none" stroke="#c8c8c8" stroke-width="1.15" />
<path d="M501.4,76.6 V84.4 H493.6" fill="none" stroke="#c8c8c8" stroke-width="1.15" />
<path d="M512.8,84.2 h7 l-3.5,4 z" fill="#a8a8a8" />
<path d="M525.5,75 V92.7" fill="none" stroke="#c6c6c6" stroke-width="1" />
<circle cx="549.4" cy="81" r="6.9" fill="#fdfdfd" stroke="#3a3a38" stroke-width="1.1"/>
<path d="M544.6,86.5 L537.6,93.2" fill="none" stroke="#3a3a38" stroke-width="1.9" />
<text x="546.2" y="84.7" font-size="12" fill="#1e8bcd" font-family="Liberation Sans, sans-serif" >a</text>
<text x="551.6" y="93.7" font-size="12.5" fill="#3a3a38" font-family="Liberation Sans, sans-serif" stroke="#fafafa" stroke-width="2.2" paint-order="stroke">d</text>
<text x="568.4" y="83.9" font-size="12.6" fill="#3a3a38" font-family="Liberation Sans, sans-serif" textLength="22.6" lengthAdjust="spacingAndGlyphs">abc</text>
<path d="M577.2,90.4 L581.2,94 L591,84.3" fill="none" stroke="#2aa84a" stroke-width="1.5" />
<path d="M599.4,75 V92.7" fill="none" stroke="#c6c6c6" stroke-width="1" />
<rect x="609.5" y="73.8" width="20" height="20" fill="#fff" stroke="#3a3a38" stroke-width="1" />
<path d="M614.5,73.8 v20 M609.5,78.8 h20 M619.5,73.8 v20 M609.5,83.8 h20 M624.5,73.8 v20 M609.5,88.8 h20 " fill="none" stroke="#3a3a38" stroke-width="1" />
<rect x="609.5" y="78.8" width="20" height="5" fill="#92c7ef" stroke="#1e8bcd" stroke-width="1" />
<path d="M614.5,78.8 v5 M619.5,78.8 v5 M624.5,78.8 v5" fill="none" stroke="#4fa3dc" stroke-width="1" />
<path d="M638.5999999999999,84.2 h7 l-3.5,4 z" fill="#000" />
<rect x="653.5" y="73.8" width="20" height="20" fill="#fff" stroke="#3a3a38" stroke-width="1" />
<path d="M658.5,73.8 v20 M653.5,78.8 h20 M663.5,73.8 v20 M653.5,83.8 h20 M668.5,73.8 v20 M653.5,88.8 h20 " fill="none" stroke="#3a3a38" stroke-width="1" />
<rect x="658.5" y="73.8" width="5" height="20" fill="#92c7ef" stroke="#1e8bcd" stroke-width="1" />
<path d="M658.5,78.8 h5 M658.5,83.8 h5 M658.5,88.8 h5" fill="none" stroke="#4fa3dc" stroke-width="1" />
<path d="M682.8,84.2 h7 l-3.5,4 z" fill="#000" />
<path d="M695.4,75 V92.7" fill="none" stroke="#c6c6c6" stroke-width="1" />
<rect x="705.6" y="73.5" width="21.8" height="21" fill="#fdfdfd" stroke="#3a3a38" stroke-width="1.1" />
<rect x="706" y="74" width="21" height="1.6" fill="#797774" />
<path d="M705.5,76 H727.5" fill="none" stroke="#3a3a38" stroke-width="1" />
<path d="M716.5,76 V94.5" fill="none" stroke="#3a3a38" stroke-width="1" />
<text x="708" y="84.4" font-size="9.7" fill="#1e8bcd" font-family="Liberation Sans, sans-serif" >A</text>
<text x="708" y="93" font-size="9.5" fill="#a33e9a" font-family="Liberation Sans, sans-serif" >Z</text>
<text x="718.9" y="83.8" font-size="9.5" fill="#a33e9a" font-family="Liberation Sans, sans-serif" >Z</text>
<text x="718.8" y="93" font-size="9.7" fill="#1e8bcd" font-family="Liberation Sans, sans-serif" >A</text>
<text x="739.9" y="82.9" font-size="12.2" fill="#1e8bcd" font-family="Liberation Sans, sans-serif" >A</text>
<text x="740.6" y="93.9" font-size="12.2" fill="#a33e9a" font-family="Liberation Sans, sans-serif" >Z</text>
<path d="M756.5,76 V91 M752,86.8 L756.5,91.4 L761,86.8" fill="none" stroke="#3a3a38" stroke-width="1.1" />
<text x="773.6" y="82.9" font-size="12.2" fill="#a33e9a" font-family="Liberation Sans, sans-serif" >Z</text>
<text x="772.9" y="93.9" font-size="12.2" fill="#1e8bcd" font-family="Liberation Sans, sans-serif" >A</text>
<path d="M789.5,76 V91 M785,86.8 L789.5,91.4 L794,86.8" fill="none" stroke="#3a3a38" stroke-width="1.1" />
<path d="M808.9,74.9 H823.9 Q826.2,75.1 824.9,77.2 L819.6,84.6 M813.4,85.6 L807.8,77.2 Q806.6,75.1 808.9,74.9 M813.4,85.6 V89.6 Q813.5,91.2 815.8,91.7" fill="none" stroke="#3a3a38" stroke-width="1.1" stroke-linejoin="round"/>
<path d="M821.8,84.2 H827 L823.6,87.6 H825.6 L817.2,95 L820.2,89.4 H818.4 Z" fill="#f9b35c" stroke="#ed8733" stroke-width="0.8" stroke-linejoin="round"/>
<path d="M835.5,75 V92.7" fill="none" stroke="#c6c6c6" stroke-width="1" />
<rect x="847.5" y="74.5" width="19" height="19" fill="#fafafa" stroke="#3a3a38" stroke-width="1" />
<circle cx="852.2" cy="79.2" r="2" fill="#fbd9a0" stroke="#ed8733" stroke-width="0.9"/>
<path d="M848,92 L855,85.3 L857,87.2 L861,83.4 L866,88.3 V93 H848 Z" fill="#83beec" stroke="#1e6eb0" stroke-width="1" stroke-linejoin="round"/>
<path d="M852,93 L857,87.2" fill="none" stroke="#1e6eb0" stroke-width="1" />
<rect x="880.5" y="79.5" width="4" height="14" fill="#83beec" stroke="#1e6eb0" stroke-width="1" rx="0.8" />
<rect x="887.5" y="74.5" width="4" height="19" fill="#f8db8f" stroke="#ed8733" stroke-width="1" rx="0.8" />
<rect x="894.3" y="82.5" width="4" height="11.3" fill="#7a7a78" stroke="#3a3a38" stroke-width="1" />
<path d="M220.2,120.4 L224.7,125.0 L229.2,120.4" fill="none" stroke="#444" stroke-width="1.0" />
<path d="M303.5,120.4 L308,125.0 L312.5,120.4" fill="none" stroke="#444" stroke-width="1.0" />
<path d="M322.7,114 V131.8" fill="none" stroke="#c6c6c6" stroke-width="1" />
<path d="M402,131.5 H414" fill="none" stroke="#1e8bcd" stroke-width="1.2" />
<path d="M427.5,123.0 h7 l-3.5,4 z" fill="#000" />
<path d="M440.4,114 V131.8" fill="none" stroke="#c6c6c6" stroke-width="1" />
<path d="M454.4,127.8 L459.8,114.8 H460.9 L466.3,127.8 M456.4,123.2 H464.3" fill="none" stroke="#3a3a38" stroke-width="1.5" stroke-linejoin="round"/>
<rect x="448" y="129" width="24" height="6" fill="#2a6099" />
<path d="M479.6,123.0 h7 l-3.5,4 z" fill="#000" />
<path d="M495,127 V119.2 Q495,117 497.2,117 L500.8,117.2 L498.4,118.9 L497.1,121.2 L496.9,125.2 Z" fill="#0a68c0" />
<path d="M498.3,118.8 L507.2,115.1 L510.6,124.6 L503.1,128.2 Z" fill="#fdfdfd" stroke="#3a3a38" stroke-width="1" stroke-linejoin="round"/>
<path d="M504.6,120.8 V115.2 Q504.6,113 506.8,113 Q509,113 509,115.2 V118.2" fill="none" stroke="#3a3a38" stroke-width="1" />
<rect x="492" y="129" width="24" height="6" fill="#ffff00" />
<path d="M523.6999999999999,123.0 h7 l-3.5,4 z" fill="#000" />
<path d="M536.5,114 V131.8" fill="none" stroke="#c6c6c6" stroke-width="1" />
<path d="M549,113.5 H567 M549,116.6 H560 M549,121.5 H567 M549,124.6 H560 M549,129.5 H567 M549,132.6 H560 " fill="none" stroke="#3a3a38" stroke-width="1.1" />
<path d="M582,113.5 H600 M586,116.6 H596 M582,121.5 H600 M586,124.6 H596 M582,129.5 H600 M586,132.6 H596 " fill="none" stroke="#3a3a38" stroke-width="1.1" />
<path d="M615,113.5 H633 M622,116.6 H633 M615,121.5 H633 M622,124.6 H633 M615,129.5 H633 M622,132.6 H633 " fill="none" stroke="#3a3a38" stroke-width="1.1" />
<path d="M643.4,114 V131.8" fill="none" stroke="#c6c6c6" stroke-width="1" />
<path d="M656,113.5 H674 M656,116.6 H667 M656,121.5 H674 " fill="none" stroke="#3a3a38" stroke-width="1.1" />
<path d="M664.5,133.8 V124.6 M660.8,128.2 L664.5,124.4 L668.2,128.2" fill="none" stroke="#1e8bcd" stroke-width="1.1" />
<path d="M689,121.5 H707 M689,124.6 H700 " fill="none" stroke="#3a3a38" stroke-width="1.1" />
<path d="M697.5,112.2 V120 M693.8,116.4 L697.5,120.2 L701.2,116.4" fill="none" stroke="#1e8bcd" stroke-width="1.1" />
<path d="M697.5,133.8 V126.6 M693.8,130.2 L697.5,126.4 L701.2,130.2" fill="none" stroke="#1e8bcd" stroke-width="1.1" />
<path d="M722,124.6 H733 M722,129.5 H740 M722,132.6 H733 " fill="none" stroke="#3a3a38" stroke-width="1.1" />
<path d="M730.5,112.2 V121.4 M726.8,117.8 L730.5,121.6 L734.2,117.8" fill="none" stroke="#1e8bcd" stroke-width="1.1" />
<path d="M750.5,114 V131.8" fill="none" stroke="#c6c6c6" stroke-width="1" />
<path d="M763,113.4 H781 M763,116.8 H773.8 M763,121.2 H775.8 M763,124.5 H769 M763,132.2 H781.8 " fill="none" stroke="#3a3a38" stroke-width="1.1" />
<path d="M771,124.3 H775.5 Q779.2,124.5 779.3,128.5 V130.4 M775.8,127.2 L779.3,130.8 L782,127.2" fill="none" stroke="#1e8bcd" stroke-width="1.1" />
<path d="M791.4,114 V131.8" fill="none" stroke="#c6c6c6" stroke-width="1" />
<rect x="803.5" y="113.7" width="19.2" height="19" fill="#e1e1e1" stroke="#b3b3b3" stroke-width="1.1" />
<path d="M803.5,116.8 h19 M803.5,120.7 h19 M803.5,128.8 h19 M809.8,113.7 v7 M816.6,113.7 v7 M809.8,128.8 v4 M816.6,128.8 v4 " fill="none" stroke="#b3b3b3" stroke-width="1.1" />
<path d="M805.3,124.8 h6.2 M807.3,122.8 l-2,2 l2,2 M814.5,124.8 h6.2 M818.7,122.8 l2,2 l-2,2" fill="none" stroke="#bcbcbc" stroke-width="0.9" />
<rect x="836.5" y="113.7" width="19.2" height="19" fill="#e1e1e1" stroke="#b3b3b3" stroke-width="1.1" />
<path d="M836.5,116.8 h19 M836.5,120.7 h19 M836.5,128.8 h19 M842.8,113.7 v7 M849.6,113.7 v7 M842.8,128.8 v4 M849.6,128.8 v4 " fill="none" stroke="#b3b3b3" stroke-width="1.1" />
<rect x="869.5" y="113.7" width="19.2" height="19" fill="#e1e1e1" stroke="#b3b3b3" stroke-width="1.1" />
<path d="M869.5,116.8 h19 M869.5,120.7 h19 M869.5,128.8 h19 M875.8,113.7 v7 M882.6,113.7 v7 M875.8,128.8 v4 M882.6,128.8 v4 M874,120.7 v8 M879.1,120.7 v8 M884.2,120.7 v8 " fill="none" stroke="#b3b3b3" stroke-width="1.1" />
<path d="M170.3,156.5 L174.8,161.10000000000002 L179.3,156.5" fill="none" stroke="#444" stroke-width="1.0" />
<path d="M189.5,152.2 V166" fill="none" stroke="#c6c6c6" stroke-width="1" />
<path d="M245.60000000000002,158.9 h7 l-3.5,4 z" fill="#000" />
<rect x="261.8" y="155.5" width="12.5" height="2" fill="#2a2a2a" />
<rect x="261.8" y="161.5" width="12.5" height="2" fill="#2a2a2a" />
</svg>
<div class="t" style="left:336.9px;top:114.2px;font-weight:bold;font-size:18.8px;color:#333;transform:scaleX(0.92);transform-origin:0 0;will-change:transform">B</div>
<div class="t" style="left:373.6px;top:113px;font-family:'Liberation Serif',serif;font-style:italic;font-size:19.5px;color:#333;will-change:transform">I</div>
<div class="t" style="left:401.3px;top:113.5px;font-size:18px;color:#333;will-change:transform">U</div>
<div class="t" style="left:222.9px;top:147.4px;font-family:'Liberation Serif',serif;font-size:23.5px;color:#333;transform:scaleX(0.94);transform-origin:0 0;will-change:transform">Σ</div>
<div class="t" style="left:199.4px;top:149.0px;font-family:'Liberation Serif',serif;font-style:italic;font-size:18.5px;color:#1e8bcd;will-change:transform">f</div>
<div class="t" style="left:206.7px;top:153.7px;font-family:'Liberation Serif',serif;font-style:italic;font-size:16px;color:#1e8bcd;will-change:transform">x</div></div>
<div class="a" style="left:0;top:611.3px;width:899px;height:2px;background:#00af91"></div>
</body></html>
